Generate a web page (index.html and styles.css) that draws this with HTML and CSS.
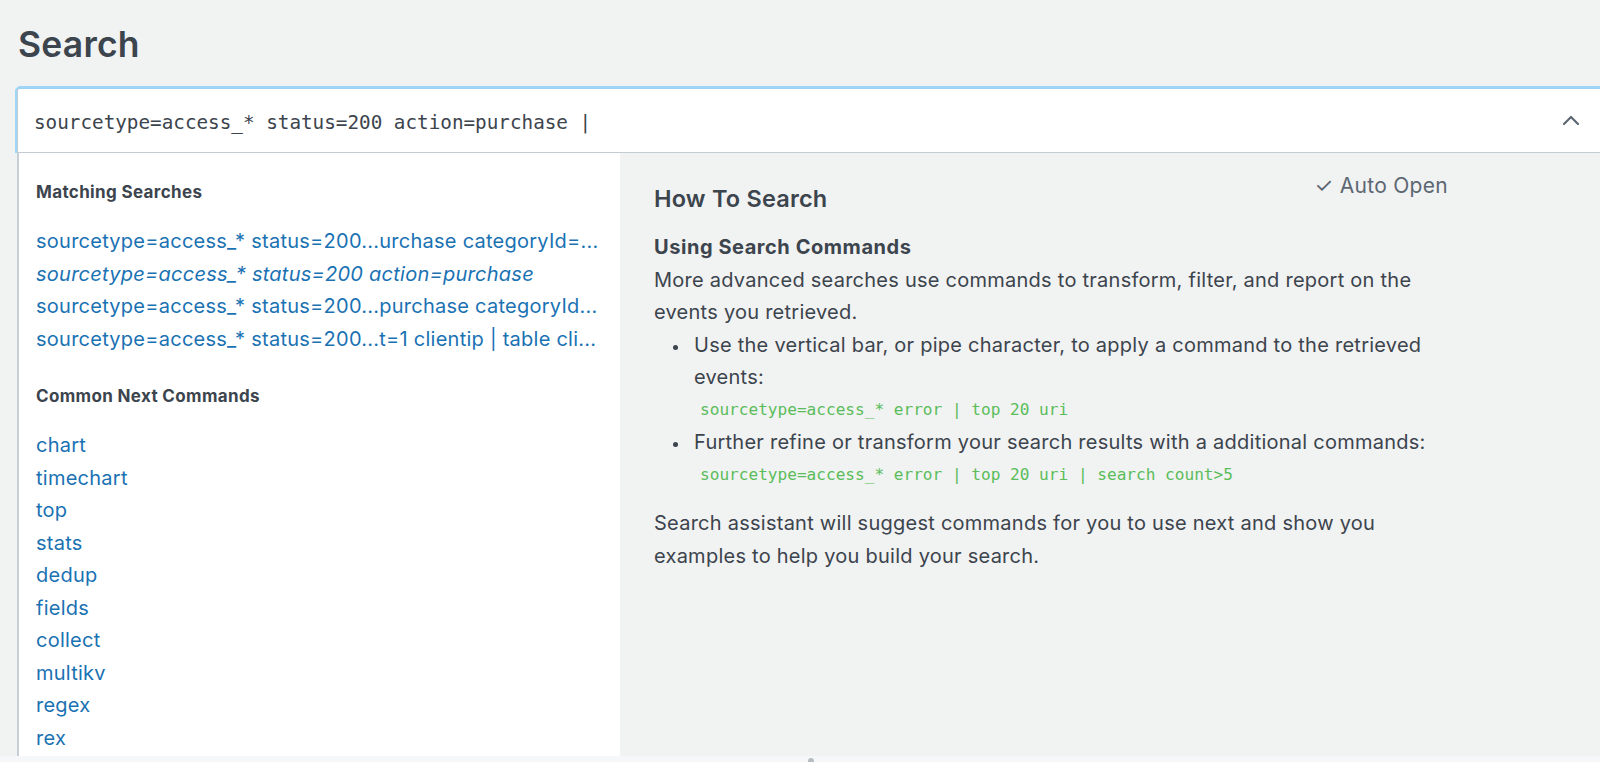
FILE: index.html
```html
<!DOCTYPE html>
<html lang="en">
<head>
<meta charset="utf-8">
<title>Search</title>
<link rel="stylesheet" href="styles.css">
</head>
<body>
<div class="page">
  <h1 class="title">Search</h1>
  <div class="searchbar">
    <span class="query">sourcetype=access_* status=200 action=purchase |</span>
    <svg class="chevron" width="18" height="11" viewBox="0 0 18 11"><polyline points="2,9 9,2 16,9" fill="none" stroke="#5c6773" stroke-width="2.2" stroke-linecap="round" stroke-linejoin="round"/></svg>
  </div>
  <div class="assistant">
    <div class="suggestions">
      <div class="group-title">Matching Searches</div>
      <ul class="links">
        <li><a href="#">sourcetype=access_* status=200...urchase categoryId=...</a></li>
        <li><a href="#" class="current">sourcetype=access_* status=200 action=purchase</a></li>
        <li><a href="#">sourcetype=access_* status=200...purchase categoryId...</a></li>
        <li><a href="#">sourcetype=access_* status=200...t=1 clientip | table cli...</a></li>
      </ul>
      <div class="group-title">Common Next Commands</div>
      <ul class="links">
        <li><a href="#">chart</a></li>
        <li><a href="#">timechart</a></li>
        <li><a href="#">top</a></li>
        <li><a href="#">stats</a></li>
        <li><a href="#">dedup</a></li>
        <li><a href="#">fields</a></li>
        <li><a href="#">collect</a></li>
        <li><a href="#">multikv</a></li>
        <li><a href="#">regex</a></li>
        <li><a href="#">rex</a></li>
      </ul>
    </div>
    <div class="help">
      <div class="help-inner">
        <div class="help-head">
          <h2>How To Search</h2>
          <span class="auto-open">✓ Auto Open</span>
        </div>
        <h3>Using Search Commands</h3>
        <p>More advanced searches use commands to transform, filter, and report on the events you retrieved.</p>
        <ul class="bullets">
          <li>Use the vertical bar, or pipe character, to apply a command to the retrieved events:
            <code>sourcetype=access_* error | top 20 uri</code></li>
          <li>Further refine or transform your search results with a additional commands:
            <code>sourcetype=access_* error | top 20 uri | search count&gt;5</code></li>
        </ul>
        <p class="last">Search assistant will suggest commands for you to use next and show you examples to help you build your search.</p>
      </div>
    </div>
  </div>
  <div class="footer-strip"><span class="handle"></span></div>
</div>
</body>
</html>
```
FILE: styles.css
```css
html, body {
  margin: 0;
  padding: 0;
  height: 100%;
  overflow: hidden;
}
body {
  background: #f1f2f2;
  font-family: Inter, "Liberation Sans", sans-serif;
  color: #3c444d;
}
.page {
  padding-left: 17px;
  display: flex;
  flex-direction: column;
  height: 100%;
}
.page > * {
  flex-shrink: 0;
}
.title {
  margin: 0;
  padding-top: 23px;
  height: 64px;
  box-sizing: border-box;
  font-size: 35.5px;
  line-height: 44px;
  font-weight: 600;
  letter-spacing: 0.2px;
  color: #3c444d;
  padding-left: 1px;
}
.searchbar {
  height: 65px;
  box-sizing: border-box;
  margin-top: 24px;
  margin-right: -1px;
  background: #fff;
  border: 1px solid #c3cbd4;
  border-top-color: #9cd3f5;
  border-radius: 3px 0 0 0;
  box-shadow: 0 -2px 0 #9fd6f7, -2px 0 0 #9fd6f7, -1px -1px 0 #9fd6f7;
  display: flex;
  align-items: center;
  padding: 3px 20px 0 16px;
}
.query {
  flex: 1;
  font-family: "DejaVu Sans Mono", "Liberation Mono", monospace;
  font-size: 19.3px;
  color: #3c444d;
}
.chevron {
  display: block;
  margin-top: -4px;
}
.assistant {
  display: flex;
  height: 603px;
  border-left: 2px solid #c7ced6;
}
.suggestions {
  width: 601px;
  background: #fff;
  padding: 29px 0 0 17px;
  box-sizing: border-box;
}
.group-title {
  font-size: 17px;
  line-height: 20px;
  font-weight: 700;
  letter-spacing: 0.35px;
  color: #3c444d;
  margin-bottom: 23px;
}
.links {
  list-style: none;
  margin: 0 0 31px 0;
  padding: 0;
}
.links li {
  font-size: 20px;
  line-height: 32.5px;
  letter-spacing: 0.25px;
  white-space: nowrap;
}
.links a {
  color: #1a72b3;
  text-decoration: none;
}
.links a.current {
  font-style: italic;
}
.help {
  flex: 1;
  padding: 30px 0 0 34px;
}
.help-inner {
  width: 796px;
}
.help-head {
  display: flex;
  justify-content: space-between;
  align-items: flex-start;
}
.help h2 {
  margin: 0 0 16px 0;
  font-size: 23.5px;
  line-height: 32px;
  font-weight: 600;
  letter-spacing: 0.2px;
}
.auto-open {
  font-size: 21px;
  line-height: 24px;
  letter-spacing: 0.3px;
  margin-top: -9px;
  color: #5c6773;
  padding-right: 2px;
}
.help h3 {
  margin: 0;
  font-size: 20px;
  line-height: 32.5px;
  font-weight: 700;
  letter-spacing: 0.55px;
}
.help p {
  margin: 0;
  font-size: 20px;
  line-height: 32.5px;
  letter-spacing: 0.25px;
}
.help p.last {
  margin-top: 16px;
}
.bullets {
  margin: 0;
  padding-left: 40px;
  list-style: none;
  font-size: 20px;
  line-height: 32.5px;
  letter-spacing: 0.25px;
}
.bullets li {
  position: relative;
}
.bullets li::before {
  content: "";
  position: absolute;
  left: -21px;
  top: 16px;
  width: 5px;
  height: 5px;
  border-radius: 50%;
  background: #3c444d;
}
.bullets code {
  display: block;
  margin-left: 6px;
  font-family: "DejaVu Sans Mono", "Liberation Mono", monospace;
  font-size: 16.1px;
  letter-spacing: 0;
  color: #5abd5a;
}
.footer-strip {
  flex: 1 1 auto;
  min-height: 0;
  overflow: hidden;
  background: #f6f7f8;
  display: flex;
  justify-content: flex-start;
  margin-left: -17px;
}
.handle {
  display: block;
  width: 6px;
  height: 10px;
  border-radius: 3px;
  background: #b5bcc3;
  margin: 2px 0 0 808px;
}
```
